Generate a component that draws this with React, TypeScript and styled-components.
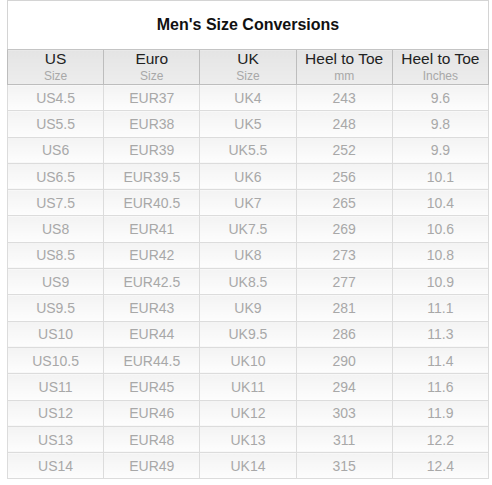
import React from "react";
import styled, { createGlobalStyle } from "styled-components";

const Global = createGlobalStyle`
  html, body { margin: 0; padding: 0; background: #ffffff; }
  body { font-family: "Liberation Sans", Arial, sans-serif; }
`;

const Page = styled.div`
  padding: 0 3px 0 7px;
  width: 492px;
  box-sizing: border-box;
`;

const Table = styled.table`
  width: 482px;
  border-collapse: collapse;
  table-layout: fixed;
  font-family: "Liberation Sans", Arial, sans-serif;
`;

const TitleCell = styled.th`
  height: 48px;
  padding: 0;
  border: 1px solid #d4d4d4;
  border-bottom: 1px solid #c4c4c4;
  background: #ffffff;
  font-size: 16px;
  font-weight: bold;
  color: #111;
  text-align: center;
  vertical-align: middle;
`;

const HeadCell = styled.th`
  height: 33px;
  padding: 0;
  border: 1px solid #bdbdbd;
  background: linear-gradient(#e4e4e4, #ededed);
  text-align: center;
  vertical-align: middle;
  font-weight: normal;
`;

const HeadMain = styled.div`
  font-size: 15.5px;
  color: #222;
  line-height: 17px;
`;

const HeadSub = styled.div`
  font-size: 12px;
  color: #a8a8a8;
  line-height: 16px;
  padding-top: 1px;
`;

const Cell = styled.td`
  height: 25.3px;
  padding: 0;
  border: 1px solid #dcdcdc;
  background: linear-gradient(#f3f3f3, #fdfdfd);
  text-align: center;
  vertical-align: middle;
  font-size: 14px;
  color: #a8a8a8;
`;

const headers = [
  ["US", "Size"],
  ["Euro", "Size"],
  ["UK", "Size"],
  ["Heel to Toe", "mm"],
  ["Heel to Toe", "Inches"],
];

const rows = [
  ["US4.5", "EUR37", "UK4", "243", "9.6"],
  ["US5.5", "EUR38", "UK5", "248", "9.8"],
  ["US6", "EUR39", "UK5.5", "252", "9.9"],
  ["US6.5", "EUR39.5", "UK6", "256", "10.1"],
  ["US7.5", "EUR40.5", "UK7", "265", "10.4"],
  ["US8", "EUR41", "UK7.5", "269", "10.6"],
  ["US8.5", "EUR42", "UK8", "273", "10.8"],
  ["US9", "EUR42.5", "UK8.5", "277", "10.9"],
  ["US9.5", "EUR43", "UK9", "281", "11.1"],
  ["US10", "EUR44", "UK9.5", "286", "11.3"],
  ["US10.5", "EUR44.5", "UK10", "290", "11.4"],
  ["US11", "EUR45", "UK11", "294", "11.6"],
  ["US12", "EUR46", "UK12", "303", "11.9"],
  ["US13", "EUR48", "UK13", "311", "12.2"],
  ["US14", "EUR49", "UK14", "315", "12.4"],
];

export default function App() {
  return (
    <Page>
      <Global />
      <Table>
        <thead>
          <tr>
            <TitleCell colSpan={5}>Men's Size Conversions</TitleCell>
          </tr>
          <tr>
            {headers.map(([main, sub], i) => (
              <HeadCell key={i}>
                <HeadMain>{main}</HeadMain>
                <HeadSub>{sub}</HeadSub>
              </HeadCell>
            ))}
          </tr>
        </thead>
        <tbody>
          {rows.map((r, i) => (
            <tr key={i}>
              {r.map((c, j) => (
                <Cell key={j}>{c}</Cell>
              ))}
            </tr>
          ))}
        </tbody>
      </Table>
    </Page>
  );
}
